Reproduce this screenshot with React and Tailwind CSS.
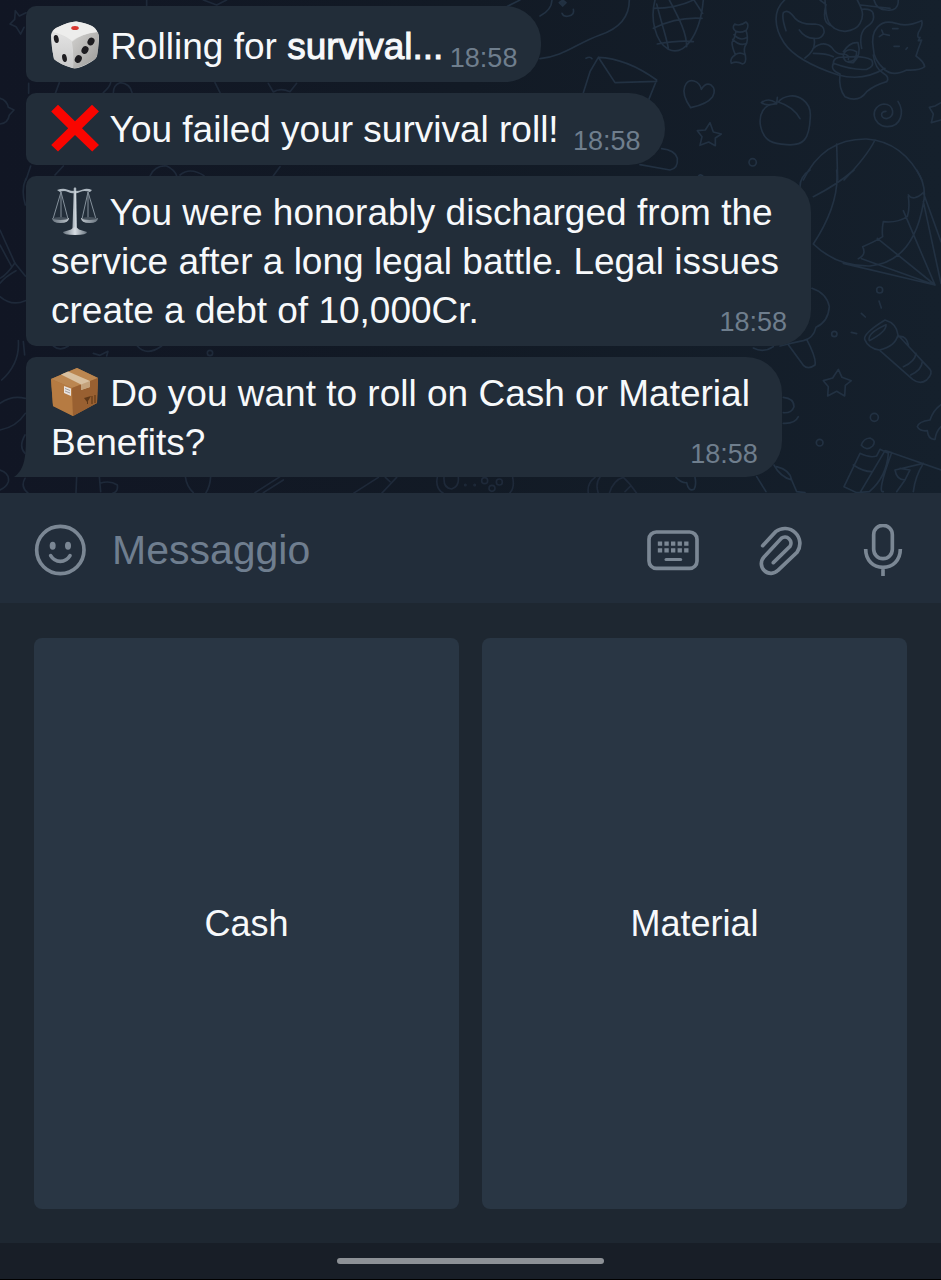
import React from "react";

function Die() {
  return (
    <svg viewBox="0 0 48 48" role="img" aria-label="Die" className="-my-1 mr-px inline h-12 w-12 align-[-6px]">
      <defs>
        <linearGradient id="dieLeft" x1="0" y1="0" x2="0" y2="1">
          <stop offset="0" stopColor="#e2e2e2" />
          <stop offset="1" stopColor="#c9c9c9" />
        </linearGradient>
        <linearGradient id="dieRight" x1="0" y1="0" x2="1" y2="1">
          <stop offset="0" stopColor="#d2d1cf" />
          <stop offset="1" stopColor="#9b9a98" />
        </linearGradient>
      </defs>
      <path d="M5 7Q22-1 28 1Q44 4 46 10Q48 13 48 18L46 35Q45 38 40 41Q27 49 21 47Q8 43 3 38Q0 24 0 14Q1 9 5 7Z" fill="#dcdcdb" />
      <path d="M1 12Q14 14 20 20Q23 34 22 47Q8 43 3 38Q0 24 1 12Z" fill="url(#dieLeft)" />
      <path d="M47 11Q31 12 21 21Q23 34 22 47Q28 48 41 40Q45 38 46 35Q49 20 47 11Z" fill="url(#dieRight)" />
      <path d="M5 7Q22-1 28 1Q44 4 46 11Q30 13 21 20Q14 14 2 11Q2 9 5 7Z" fill="#ededec" />
      <ellipse cx="24" cy="7" rx="3.8" ry="2" fill="#d8362f" />
      <g fill="#1d1c20">
        <ellipse cx="5.3" cy="18" rx="2.4" ry="4" transform="rotate(-12 5.3 18)" />
        <ellipse cx="13.5" cy="37" rx="2.3" ry="4" transform="rotate(-12 13.5 37)" />
        <ellipse cx="40" cy="20.5" rx="3.3" ry="4.1" transform="rotate(30 40 20.5)" />
        <ellipse cx="34" cy="29" rx="3.3" ry="4.1" transform="rotate(30 34 29)" />
        <ellipse cx="27.3" cy="38" rx="3.3" ry="4.1" transform="rotate(30 27.3 38)" />
      </g>
    </svg>
  );
}

function Cross() {
  return (
    <svg viewBox="0 0 48 48" role="img" aria-label="Cross mark" className="-my-1 mr-px inline h-12 w-12 align-[-6px]">
      <path d="M7 .8L24 17.2L41 .8L48 7.6L31 24.2L48 41L41.2 47.6L24 31L7 47.6L.2 41L17.2 24.2L.2 7.6Z" fill="#fa0500" />
    </svg>
  );
}

function Scales() {
  return (
    <svg viewBox="0 0 48 48" role="img" aria-label="Scales" className="-my-1 mr-px inline h-12 w-12 align-[-6px]" fill="none">
      <defs>
        <linearGradient id="pan" x1="0" y1="0" x2="1" y2="0">
          <stop offset="0" stopColor="#69747f" />
          <stop offset=".5" stopColor="#d7dde3" />
          <stop offset="1" stopColor="#69747f" />
        </linearGradient>
      </defs>
      <path d="M10 5L2 32M10 5V32M10 5L17 32M37 5L31 32M37 5V32M37 5L45 32" stroke="#84909b" strokeWidth="1" />
      <path d="M6 3Q12 1 16 2.5T24 4Q28 4 32 2.5T41 3L39 5Q33 3 29 5T24 6Q21 7 17 5T9 5Z" fill="#aeb8c1" />
      <path d="M22.8 1.5L24 0L25.2 1.5L26 41H21.5Z" fill="#b0bac3" />
      <path d="M24.2 4V42" stroke="#dde3e8" strokeWidth="1" />
      <path d="M1 31H18Q18 36 9.500 36T1 31ZM30 31H47Q47 36 38.500 36T30 31Z" fill="url(#pan)" />
      <ellipse cx="9.500" cy="31.500" rx="7.500" ry="1.400" fill="#46515c" />
      <ellipse cx="38.500" cy="31.500" rx="7.500" ry="1.400" fill="#46515c" />
      <path d="M20 42.500Q24 38 28 42.500L36 45Q36 48 24 48T12 45Z" fill="url(#pan)" />
    </svg>
  );
}

function Parcel() {
  return (
    <svg viewBox="0 0 48 48" role="img" aria-label="Package" className="-my-1 mr-px inline h-12 w-12 align-[-6px]">
      <path d="M0 11L26 0L47 10L46 35L22 48L2 38Z" fill="#a9713c" />
      <path d="M0 11L26 0L47 10L21 20Z" fill="#bb8650" />
      <path d="M0 11L21 20L22 48L2 38Z" fill="#b67b42" />
      <path d="M47 10L21 20L22 48L46 35Z" fill="#996031" />
      <path d="M10 6.500L17 3.500L39 13V19L30 22V16.500Z" fill="#d8c0a0" />
      <path d="M30 16.500L39 13V19L30 22Z" fill="#c4a27b" />
      <path d="M13 18L20 20.500V28L13 25Z" fill="#e9e3df" />
      <path d="M14 20.500L19 22.500M14 23L19 25" stroke="#a39e9c" strokeWidth="1" />
      <path d="M33 30L40 28L37 33V36L36 36V34Z" fill="#5f3818" />
      <path d="M41 28V36M44 27V35" stroke="#6b401c" strokeWidth="1.400" />
    </svg>
  );
}

function Wallpaper() {
  return (
    <svg
      viewBox="0 0 941 493"
      preserveAspectRatio="xMidYMin slice"
      aria-hidden="true"
      className="absolute inset-0 h-full w-full"
      fill="none"
      stroke="#223142"
      strokeLinecap="round"
      strokeLinejoin="round"
      strokeWidth="5"
    >
      <g transform="translate(540 0) scale(.33333)">
        <path d="M-100 20L-60 0M0 176C70 170 110 130 180 105C240 85 268 50 268 0M0 48Q35 30 36 0M66 40Q70 52 86 48Q104 44 100 28" />
        <path d="M68 0L78 8L68 18L58 8Z" fill="#213040" />
        <path d="M345 0C330 55 345 125 385 148C430 170 480 110 490 0M340 25Q410 25 460 0M340 85Q410 50 486 55M352 132Q420 120 460 125M350 12C370 90 385 130 385 148M388 0C420 60 440 100 440 140M462 0L488 40" />
        <path d="M584 72Q600 80 618 66Q630 75 618 92Q625 110 620 130Q608 148 616 165Q620 190 608 192Q590 182 574 190Q568 175 586 164Q576 140 576 128Q586 110 588 94Q574 85 584 72ZM588 94Q602 100 616 92M578 118Q600 140 620 130M582 104Q600 125 622 112M586 164Q600 155 614 164" />
        <path d="M130 278L150 215L175 172Q260 175 350 240L325 302M175 172L225 248L350 244M138 175Q150 168 156 176" />
        <path d="M452 323Q425 285 434 260Q442 238 462 243Q480 248 484 268Q495 248 512 254Q530 268 518 290Q502 312 452 323Z" />
        <path d="M510 368L520 396L544 402L526 414L526 437L506 426L480 436L486 410L472 392L496 390Z" />
        <path d="M710 312C670 310 655 345 662 380C672 425 700 432 740 434C790 438 808 420 811 350C814 300 770 285 750 288Q725 292 715 306Q760 320 780 356M710 312L712 292M710 310Q680 320 664 308Q685 292 708 308" />
        <circle cx="638" cy="487" r="11" />
        <path d="M300 494L390 510Q415 505 412 475Q405 450 365 446M475 529Q480 520 490 530" />
        <path d="M1074 304C1094 335 1084 380 1042 380C995 378 988 318 1032 312C1062 312 1068 352 1040 356C1020 354 1020 334 1038 334" />
        <path d="M1203 308L1185 318L1168 322L1180 342L1174 368L1203 360" />
        <path d="M790 540Q850 415 980 417Q1090 425 1146 540M890 432L893 540M1005 420Q980 470 912 540" />
      </g>
      <g transform="translate(770 0) scale(.33333)">
        <path d="M44 0C10 30 10 80 42 128C70 170 130 200 205 225Q280 245 345 205M48 92Q35 55 40 38Q55 25 75 55Q95 75 135 72Q165 75 162 98Q155 118 132 115Q105 115 88 90M132 115Q140 150 105 174M165 0C168 40 165 90 225 94Q260 90 270 70C285 45 275 25 262 0M150 0L168 14Q155 65 180 76M275 28Q310 25 310 45Q315 65 290 80Q265 100 275 145M312 0Q320 30 350 30Q385 35 385 0M272 15Q320 20 360 25" />
        <path d="M130 145Q160 120 185 142Q200 165 220 162Q240 165 235 178M130 160Q170 160 190 170M220 155Q240 125 264 128Q275 165 250 188Q220 190 220 165Q230 140 260 155Q260 185 235 185M190 190Q190 170 220 172Q280 165 305 180Q315 200 290 208Q250 212 190 190Q180 210 210 222Q205 265 225 290Q265 310 290 275Q315 255 350 245Q360 232 340 220Q315 205 310 165" />
        <path d="M310 145C300 90 330 55 378 70Q410 82 455 62Q460 75 445 98Q440 115 450 112L445 122L455 120Q445 145 438 168Q462 185 464 200Q450 212 410 210Q370 230 345 210Q310 180 310 145M328 110L340 102L335 90M340 102L358 106M368 86H384M372 139H388M408 148L412 143" />
      </g>
      <g transform="translate(640 170) scale(.33333)">
        <path d="M480 50Q480 20 510 0M520 222Q600 100 590 0M520 80Q590 45 642 0M520 222Q590 290 690 288Q820 275 850 100Q862 50 830 0M805 75Q820 95 850 68M805 80Q810 115 802 140Q770 160 730 155Q725 180 728 200Q705 215 668 230Q680 255 655 266M610 280L885 345M665 266L885 345M712 205L885 345L790 122M850 68L903 215M850 95L903 340" />
        <path d="M516 355Q560 370 568 410Q565 455 528 472Q520 505 490 512Q450 520 420 528M445 524L490 586Q505 600 525 585Q530 565 500 508M340 534Q370 550 400 530" />
        <circle cx="719" cy="360" r="9" /><circle cx="583" cy="492" r="8" /><circle cx="703" cy="742" r="12" /><circle cx="539" cy="818" r="10" />
        <path d="M717 393L724 414M664 430L676 441M634 487L650 491M674 508Q670 490 735 450Q770 460 774 495Q765 530 718 540Q685 535 674 508ZM688 512Q680 490 738 464Q740 485 688 512ZM720 542L818 628Q840 645 860 630Q880 610 870 598L774 495M776 500Q800 495 806 530M790 590Q825 575 828 550M812 615Q845 600 847 575" />
        <path d="M595 598L606 622L634 632L616 646L614 678L590 664L563 678L565 650L550 632L578 624Z" />
        <path d="M430 682Q462 685 462 710Q455 730 430 728M430 760Q465 762 475 740" />
        <path d="M903 704Q880 720 870 750Q835 755 832 770Q840 785 862 782Q865 810 885 808Q888 785 903 770M664 826Q670 805 690 804Q710 812 698 828Q680 845 664 826ZM612 950L660 850Q690 865 710 858L720 838L745 850Q740 920 688 965L650 968ZM640 885Q670 905 695 905M660 968L735 842L755 848Q710 970 730 965M755 848L903 900M765 900L850 880Q825 920 820 965M765 900Q770 930 795 930L770 965M780 895L810 900L795 930M350 920L378 965M402 885Q420 920 455 930L470 965L495 968M410 890Q450 900 455 930M108 922Q125 940 140 938Q145 965 162 958Q170 945 165 922" />
      </g>
      <g transform="scale(.33333)" stroke="#1e2939">
        <path d="M78 38L58 48L46 32L44 58L30 72L48 80L62 102L72 82M86 250V280M178 248L166 280M310 278Q330 260 332 248M340 278Q340 255 360 248Q390 250 396 278M645 248L660 278M805 250L820 276Q840 262 870 275L890 250M0 295Q20 300 25 322L42 330L28 345Q24 370 0 372M92 498L78 540M190 498L165 525M450 528Q465 495 500 498Q525 510 530 528M540 525Q570 500 612 527M840 500L820 527M440 0V18M610 0L650 15L680 0" />
      </g>
      <g transform="translate(0 170) scale(.33333)" stroke="#1e2939">
        <path d="M78 25Q62 60 76 105M0 180L45 280L76 318M0 225L35 290M0 325Q20 315 45 278M0 340Q15 320 48 302M0 380Q35 410 76 392M55 512Q60 580 5 630M70 515L74 555M0 700Q35 675 76 685M0 780Q50 770 76 730M75 795Q55 830 75 850M75 925Q60 950 85 970M0 900Q30 910 25 935Q20 950 0 960M230 920L228 968M298 920L302 965M300 940Q330 930 352 945Q355 965 338 970M556 920Q560 950 580 968M632 920Q630 950 618 968M765 968L840 920M790 968L850 930M160 528Q180 545 205 528M280 550L300 556L324 544L320 558M412 528Q440 560 485 528" />
        <circle cx="630" cy="549" r="8" />
      </g>
      <g transform="translate(300 440) scale(.33333)" stroke="#1e2939">
        <path d="M160 160L235 112M245 160L290 112M256 112L270 125M412 112Q405 145 430 160M432 112Q430 145 455 147Q478 140 475 112M638 112Q645 145 628 160M865 160Q860 130 885 112M895 160Q885 130 900 112M928 160Q940 120 970 112Q990 130 1010 160M975 155L990 140" />
        <circle cx="554" cy="122" r="9" /><circle cx="598" cy="126" r="9" /><circle cx="576" cy="145" r="9" /><circle cx="496" cy="135" r="2" /><circle cx="524" cy="135" r="2" />
      </g>
    </svg>
  );
}

function Message({ children, oneLine, tail, first }) {
  return (
    <li
      className={
        "relative grid w-fit rounded-l-[10px] rounded-r-[36px] bg-[#222d39] " +
        (first ? "pt-4 " : "pt-3 ") +
        (tail ? "rounded-bl-none pr-[32px] pb-[10px]" : "pb-[11px]")
      }
    >
      {tail && (
        <svg viewBox="0 0 14 40" aria-hidden="true" className="absolute bottom-0 -left-3 h-10 w-3.5" fill="#222d39">
          <path d="M12 0C12 22 10 33 0 40H14V0Z" />
        </svg>
      )}
      <p
        className={
          "col-start-1 row-start-1 pl-[25px] text-[37px] leading-[49px] text-[#f7f9fb] " +
          (oneLine ? (first ? "pr-[98px]" : "pr-[106px]") : tail ? "" : "pr-[32px]")
        }
      >
        {children}
      </p>
      <time
        className={
          "col-start-1 row-start-1 self-end justify-self-end text-[27px] leading-[26px] text-[#6f7e8d] " +
          (tail ? "-mr-2" : "mr-6")
        }
      >
        18:58
      </time>
    </li>
  );
}

function IconButton({ label, children, box }) {
  return (
    <button type="button" aria-label={label} className="shrink-0">
      <svg viewBox={box} className="h-[52px] w-[52px]" fill="none" stroke="currentColor" strokeWidth="11" strokeLinecap="round">
        {children}
      </svg>
    </button>
  );
}

function Composer() {
  return (
    <form className="flex h-[110px] items-center bg-[#222d3a] pt-1 pr-8 pl-[34px] text-[#7b8794]" onSubmit={(e) => e.preventDefault()}>
      <IconButton label="Emoji" box="102 102 156 156">
        <circle cx="181" cy="180" r="71" />
        <g fill="currentColor" stroke="none">
          <ellipse cx="158" cy="167" rx="9" ry="12" />
          <ellipse cx="204" cy="167" rx="9" ry="12" />
        </g>
        <path d="M152 197Q162 214 181 214T210 197" />
      </IconButton>
      <input
        type="text"
        aria-label="Messaggio"
        placeholder="Messaggio"
        className="ml-[26px] min-w-0 flex-1 bg-transparent text-[41px] leading-[50px] text-[#f7f9fb] outline-none placeholder:text-[#6f7e8f] placeholder:opacity-100"
      />
      <div className="flex gap-[53px]">
        <IconButton label="Keyboard" box="81 102 156 156">
          <rect x="87" y="126" width="144" height="109" rx="22" />
          <path d="M138 208.500H182" strokeWidth="9" />
          <path
            strokeLinecap="butt"
            strokeWidth="13"
            strokeDasharray="13 6.750"
            d="M113.500 161H206M113.500 181H206"
          />
        </IconButton>
        <IconButton label="Attach" box="393 102 156 156">
          <path d="M425 167L464 125A45 45 0 0 1 528 187L471 241A29 29 0 0 1 429 201L481 145A18 18 0 0 1 507 169L457 218" />
        </IconButton>
        <IconButton label="Record" box="711 102 156 156">
          <rect x="761" y="106" width="56" height="100" rx="28" />
          <path strokeLinecap="butt" d="M737 177C737 211 760 232 789 232S841 211 841 177M789 232V260" />
        </IconButton>
      </div>
    </form>
  );
}

export default function App() {
  return (
    <main className="flex min-h-screen flex-col bg-[#1e2731] font-['Liberation_Sans',Arial,sans-serif]">
      <section className="relative bg-linear-to-r from-[#111624] via-[#121a25] to-[#15202c]">
        <Wallpaper />
        <ol className="relative flex flex-col gap-[11px] px-[26px] pt-1.5 pb-4">
          <Message first oneLine>
            <Die /> Rolling for{" "}
            <strong className="font-normal [-webkit-text-stroke:1px_currentColor]">survival...</strong>
          </Message>
          <Message oneLine>
            <Cross /> You failed your survival roll!
          </Message>
          <Message>
            <Scales /> You were honorably discharged from the
            <br />
            service after a long legal battle. Legal issues
            <br />
            create a debt of 10,000Cr.
          </Message>
          <Message tail>
            <Parcel /> Do you want to roll on Cash or Material
            <br />
            Benefits?
          </Message>
        </ol>
      </section>
      <Composer />
      <section className="grid flex-1 grid-cols-2 gap-[23px] px-[34px] pt-[35px] pb-[34px]">
        <button type="button" className="rounded-lg bg-[#293644] text-[36px] text-[#f7f9fb]">
          Cash
        </button>
        <button type="button" className="rounded-lg bg-[#293644] text-[36px] text-[#f7f9fb]">
          Material
        </button>
      </section>
      <footer className="flex h-[37px] items-center justify-center border-b border-black bg-[#181e27]">
        <div className="h-1.5 w-[267px] rounded-full bg-[#8d9196]" />
      </footer>
    </main>
  );
}
